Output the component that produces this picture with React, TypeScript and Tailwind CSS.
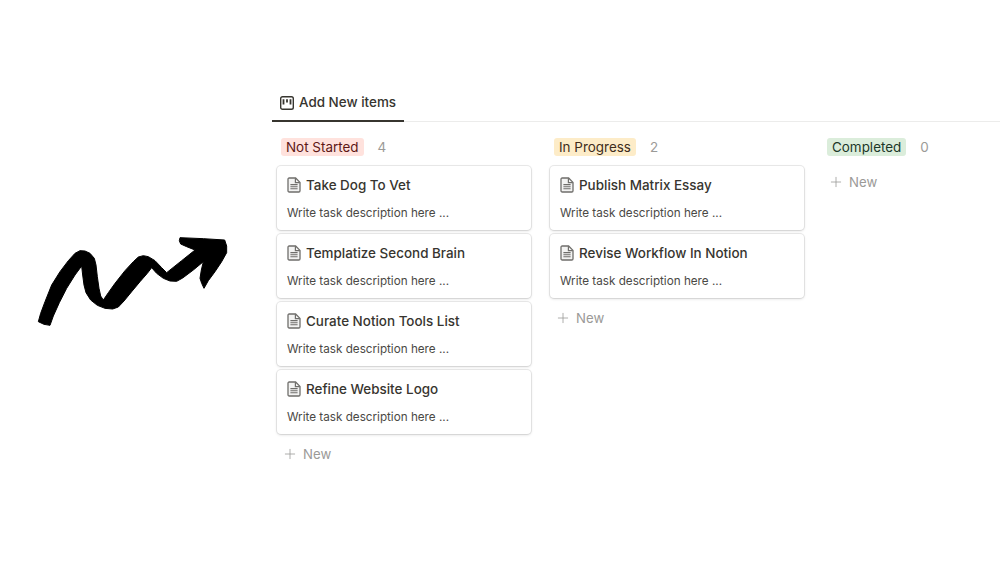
import { Plus } from 'lucide-react'

interface Column {
  name: string
  badge: string
  tasks: string[]
}

const columns: Column[] = [
  { name: 'Not Started', badge: 'bg-[#ffe2dd] text-[#5d1715]', tasks: ['Take Dog To Vet', 'Templatize Second Brain', 'Curate Notion Tools List', 'Refine Website Logo'] },
  { name: 'In Progress', badge: 'bg-[#fdecc8] text-[#402c1b]', tasks: ['Publish Matrix Essay', 'Revise Workflow In Notion'] },
  { name: 'Completed', badge: 'bg-[#dbeddb] text-[#1c3829]', tasks: [] },
]

const scribble = '115,305 132,313 150,316 160,288 178,248 200,205 225,165 245,138 248,165 252,195 258,218 272,240 292,256 315,265 338,267 355,261 372,243 395,215 420,185 442,160 455,143 470,160 490,175 510,183 530,184 548,174 580,150 610,125 604,150 600,175 605,190 612,205 625,182 645,155 665,125 680,98 680,78 674,60 610,56 540,53 538,62 542,72 560,80 585,90 545,122 500,158 485,143 465,122 445,110 430,107 415,111 400,125 375,152 345,190 325,218 310,240 302,228 297,205 292,170 288,135 283,115 270,100 255,93 240,92 225,100 205,122 180,155 155,195 135,245 122,280'

function DocIcon() {
  return (
    <svg width="14" height="16" viewBox="0 0 14 16" fill="none" className="shrink-0">
      <path d="M1 2.2C1 1.5 1.5 1 2.2 1H8.6L13 5.4V13.8C13 14.5 12.5 15 11.8 15H2.2C1.5 15 1 14.5 1 13.8V2.2Z" fill="#f3f3f2" stroke="#6f6e6b" strokeWidth="1.3" />
      <path d="M8.4 1.2V5.6H12.8" stroke="#6f6e6b" strokeWidth="1.2" />
      <path d="M3.4 7.6H10.6M3.4 9.7H10.6M3.4 11.8H10.6" stroke="#6f6e6b" strokeWidth="1.1" />
    </svg>
  )
}

function BoardIcon() {
  return (
    <svg width="14" height="14" viewBox="0 0 14 14" fill="none" className="shrink-0">
      <rect x="0.7" y="0.7" width="12.6" height="12.6" rx="1.8" stroke="#37352f" strokeWidth="1.4" />
      <path d="M3.5 3.2V8.6M7 3.2V6.4M10.5 3.2V8.6" stroke="#37352f" strokeWidth="1.8" />
    </svg>
  )
}

function NewRow({ className }: { className: string }) {
  return (
    <div className={`flex items-center gap-[5px] pl-[5px] text-[13.2px] leading-[20px] text-[#9b9a97] ${className}`}>
      <Plus size={16} strokeWidth={1.2} />
      <span>New</span>
    </div>
  )
}

function TaskCard({ title }: { title: string }) {
  return (
    <div className="h-[64px] rounded-[4px] bg-white px-[10px] pt-[9px] shadow-[0_0_0_1px_rgba(15,15,15,0.08),0_1px_3px_rgba(15,15,15,0.14)]">
      <div className="flex h-[20px] items-center gap-[5px] text-[13.45px] font-medium leading-[20px] text-[#37352f]">
        <DocIcon />
        <span>{title}</span>
      </div>
      <p className="mt-[9px] text-[11.7px] leading-[18px] text-[#4a4945]">Write task description here ...</p>
    </div>
  )
}

function BoardColumn({ column }: { column: Column }) {
  return (
    <div className="w-[254px] shrink-0">
      <div className="flex h-[18px] items-center pl-[4px] text-[13.45px]">
        <span className={`rounded-[3px] px-[5px] leading-[18px] ${column.badge}`}>{column.name}</span>
        <span className="ml-[14px] text-[#9b9a97]">{column.tasks.length}</span>
      </div>
      <div className="mt-[10px] flex flex-col gap-[4px]">
        {column.tasks.map(t => <TaskCard key={t} title={t} />)}
      </div>
      <NewRow className={column.tasks.length ? 'mt-[10px]' : 'mt-[6px]'} />
    </div>
  )
}

export default function App() {
  return (
    <div className="flex h-[563px] w-[1000px] overflow-hidden bg-white font-['Inter',sans-serif]">
      <div className="w-[272px] shrink-0 pt-[220px]">
        <svg width="240" height="120" viewBox="0 0 720 360">
          <polygon points={scribble} fill="#000" stroke="#000" strokeWidth="3" strokeLinejoin="round" />
        </svg>
      </div>
      <div className="min-w-0 flex-1 pt-[92px]">
        <div className="flex h-[30px] border-b border-[#ececeb]">
          <div className="-mb-px flex h-[30px] w-[132px] items-center gap-[5px] border-b-2 border-[#37352f] pb-[7px] pl-[8px] text-[13.45px] font-medium text-[#37352f]">
            <BoardIcon />
            <span>Add New items</span>
          </div>
        </div>
        <div className="mt-[16px] flex gap-[19px] pl-[5px]">
          {columns.map(c => <BoardColumn key={c.name} column={c} />)}
        </div>
      </div>
    </div>
  )
}
